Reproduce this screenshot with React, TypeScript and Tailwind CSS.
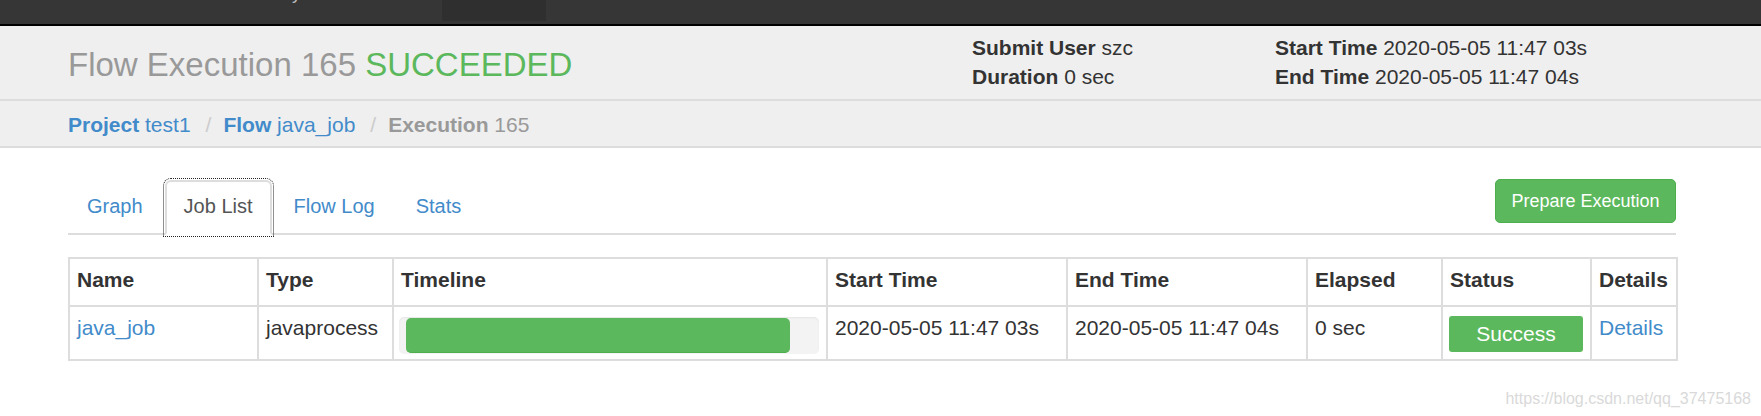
import React from "react";

const tabs = ["Graph", "Job List", "Flow Log", "Stats"];

export default function App() {
  return (
    <div className="w-[1761px] h-[416px] overflow-hidden bg-white font-['Liberation_Sans',Arial,sans-serif] text-[#333]">
      {/* top nav bar */}
      <div className="h-[24px] bg-[#363636] flex items-start overflow-hidden">
        <span className="ml-[292px] w-[9px] mt-[-17px] text-[18px] leading-[20px] text-[#bdbdbd]">y</span>
        <div className="ml-[141px] h-[21px] w-[104px] bg-[#2f2f2f]" />
      </div>
      <div className="h-[2px] bg-black" />

      {/* header */}
      <div className="h-[75px] bg-[#efefef] border-b-2 border-[#dddddd] flex">
        <div className="pl-[68px] w-[972px] pt-[19px] text-[33px] leading-[40px] text-[#999999]">
          Flow Execution 165 <span className="text-[#5cb85c]">SUCCEEDED</span>
        </div>
        <div className="w-[303px] pt-[7px] text-[21px] leading-[29px]">
          <div>
            <span className="font-bold">Submit User</span> szc
          </div>
          <div>
            <span className="font-bold">Duration</span> 0 sec
          </div>
        </div>
        <div className="pt-[7px] text-[21px] leading-[29px]">
          <div>
            <span className="font-bold">Start Time</span> 2020-05-05 11:47 03s
          </div>
          <div>
            <span className="font-bold">End Time</span> 2020-05-05 11:47 04s
          </div>
        </div>
      </div>

      {/* breadcrumb */}
      <div className="h-[47px] bg-[#efefef] border-b-2 border-[#dddddd] pl-[68px] pt-[10px] text-[21px] leading-[28px] flex">
        <span className="text-[#428bca]">
          <span className="font-bold">Project</span> test1
        </span>
        <span className="ml-[15px] mr-[12px] text-[#cccccc]">/</span>
        <span className="text-[#428bca]">
          <span className="font-bold">Flow</span> java_job
        </span>
        <span className="ml-[15px] mr-[12px] text-[#cccccc]">/</span>
        <span className="text-[#999999]">
          <span className="font-bold">Execution</span> 165
        </span>
      </div>

      {/* tabs + button */}
      <div className="ml-[68px] w-[1608px] mt-[31px] flex justify-between items-start border-b-2 border-[#dddddd]">
        <div className="flex mt-[1px] mb-[-2px] gap-[3px]">
          {tabs.map((t) => {
            const active = t === "Job List";
            return (
              <div
                key={t}
                className={
                  active
                    ? "h-[55px] px-[17px] pt-[10px] text-[20px] leading-[28px] text-[#555555] bg-white border-2 border-[#dddddd] border-b-white rounded-t-[6px] outline-1 outline-dotted outline-[#222222] outline-offset-[1px]"
                    : "h-[55px] px-[17px] pt-[10px] text-[20px] leading-[28px] text-[#428bca] border-2 border-transparent"
                }
              >
                {t}
              </div>
            );
          })}
        </div>
        <button className="h-[44px] w-[181px] rounded-[5px] bg-[#5cb85c] border border-[#4cae4c] text-white text-[18px] leading-[24px]">
          Prepare Execution
        </button>
      </div>

      {/* table */}
      <div className="ml-[68px] mt-[22px] w-fit grid grid-cols-[187px_133px_432px_238px_238px_133px_147px_84px] gap-[2px] bg-[#dddddd] border-2 border-[#dddddd] text-[21px] leading-[28px]">
        {["Name", "Type", "Timeline", "Start Time", "End Time", "Elapsed", "Status", "Details"].map((h) => (
          <div key={h} className="bg-white h-[46px] px-[7px] pt-[7px] font-bold whitespace-nowrap">
            {h}
          </div>
        ))}
        <div className="bg-white h-[52px] px-[7px] pt-[7px] text-[#428bca]">java_job</div>
        <div className="bg-white h-[52px] px-[7px] pt-[7px]">javaprocess</div>
        <div className="bg-white h-[52px] pl-[5px] pr-[7px] pt-[10px]">
          <div className="h-[37px] rounded-[5px] bg-[#f3f3f3] shadow-[inset_0_1px_2px_rgba(0,0,0,0.06)] pt-[1px] pl-[7px]">
            <div className="h-[35px] w-[384px] rounded-[5px] bg-[#5cb85c] border-b border-[#4cae4c]" />
          </div>
        </div>
        <div className="bg-white h-[52px] px-[7px] pt-[7px] whitespace-nowrap">2020-05-05 11:47 03s</div>
        <div className="bg-white h-[52px] px-[7px] pt-[7px] whitespace-nowrap">2020-05-05 11:47 04s</div>
        <div className="bg-white h-[52px] px-[7px] pt-[7px]">0 sec</div>
        <div className="bg-white h-[52px] pl-[6px] pr-[7px] pt-[9px]">
          <div className="h-[36px] rounded-[3px] bg-[#5cb85c] text-white text-[21px] leading-[36px] text-center">
            Success
          </div>
        </div>
        <div className="bg-white h-[52px] px-[7px] pt-[7px] text-[#428bca]">Details</div>
      </div>

      {/* watermark */}
      <div className="mt-[29px] flex justify-end pr-[10px] text-[16px] leading-[18px] text-[#d9d9d9]">
        https://blog.csdn.net/qq_37475168
      </div>
    </div>
  );
}
